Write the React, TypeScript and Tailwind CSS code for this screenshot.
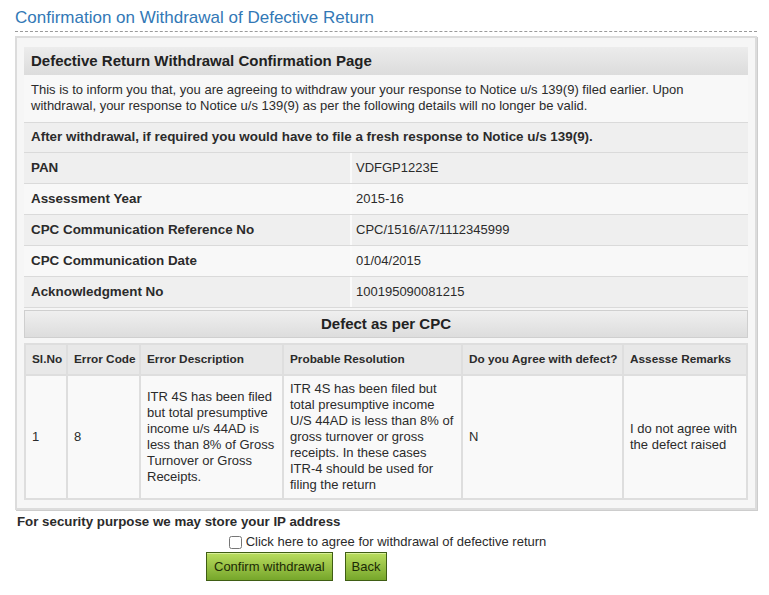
const details = [
  { label: "PAN", value: "VDFGP1223E", bg: "bg-[#efefef]" },
  { label: "Assessment Year", value: "2015-16", bg: "bg-[#f8f8f8]" },
  { label: "CPC Communication Reference No", value: "CPC/1516/A7/1112345999", bg: "bg-[#efefef]" },
  { label: "CPC Communication Date", value: "01/04/2015", bg: "bg-[#f8f8f8]" },
  { label: "Acknowledgment No", value: "100195090081215", bg: "bg-[#efefef]" },
];

const columns = [
  "Sl.No",
  "Error Code",
  "Error Description",
  "Probable Resolution",
  "Do you Agree with defect?",
  "Assesse Remarks",
];

const defects = [
  [
    "1",
    "8",
    "ITR 4S has been filed but total presumptive income u/s 44AD is less than 8% of Gross Turnover or Gross Receipts.",
    "ITR 4S has been filed but total presumptive income U/S 44AD is less than 8% of gross turnover or gross receipts. In these cases ITR-4 should be used for filing the return",
    "N",
    "I do not agree with the defect raised",
  ],
];

export default function App() {
  return (
    <div className="w-[769px] h-[595px] bg-white font-['Liberation_Sans',Arial,sans-serif] text-[#2b2b2b] overflow-hidden">
      {/* Title */}
      <div className="pl-[15px] pr-[12px] pt-[8px]">
        <h1 className="text-[17px] leading-[20px] text-[#3278b6] pb-[3px] border-b border-dashed border-[#9a9a9a]">
          Confirmation on Withdrawal of Defective Return
        </h1>
      </div>

      {/* Panel */}
      <div className="ml-[15px] w-[742px] mt-[4px] border-2 border-[#dcdcdc] bg-[#f6f6f6] px-[7px] pt-[9px] pb-[8px] shadow-[1px_1px_0_#cdcdcd]">
        <div className="h-[28px] flex items-center px-[7px] bg-gradient-to-b from-[#ececec] to-[#dcdcdc] text-[15px] font-bold text-[#222]">
          Defective Return Withdrawal Confirmation Page
        </div>

        <p className="px-[7px] pt-[7px] pb-[8px] text-[13px] leading-[16px] bg-[#f8f8f8]">
          This is to inform you that, you are agreeing to withdraw your your response to Notice u/s 139(9) filed earlier. Upon withdrawal, your response to Notice u/s 139(9) as per the following details will no longer be valid.
        </p>

        <div className="h-[31px] flex items-center px-[7px] bg-[#efefef] border-t border-b border-[#dadada] text-[13.4px] font-bold">
          After withdrawal, if required you would have to file a fresh response to Notice u/s 139(9).
        </div>

        {details.map((d) => (
          <div key={d.label} className={`h-[31px] flex border-b border-[#dadada] text-[13px] ${d.bg}`}>
            <div className="w-[326px] flex items-center px-[7px] font-bold text-[13.4px]">{d.label}</div>
            <div className="flex-1 flex items-center pl-[4px] border-l-2 border-[#fafafa]">{d.value}</div>
          </div>
        ))}

        <div className="mt-[2px] h-[28px] flex items-center justify-center border border-[#cfcfcf] bg-gradient-to-b from-[#efefef] to-[#dddddd] text-[15px] font-bold text-[#222]">
          Defect as per CPC
        </div>

        {/* Defect table */}
        <div className="mt-[5px] border-2 border-[#dedede] bg-[#dedede] grid grid-cols-[40px_71px_141px_177px_159px_122px] gap-[2px]">
          {columns.map((c) => (
            <div key={c} className="h-[29px] flex items-center px-[6px] bg-[#e8e8e8] text-[11.8px] font-bold whitespace-nowrap">
              {c}
            </div>
          ))}
          {defects.map((row) =>
            row.map((cell, i) => (
              <div key={i} className="h-[122px] flex items-center px-[6px] bg-[#f9f9f9] text-[13px] leading-[16px]">
                {cell}
              </div>
            ))
          )}
        </div>
      </div>

      {/* Footer */}
      <p className="mt-[4px] px-[17px] text-[13.3px] leading-[16px] font-bold">
        For security purpose we may store your IP address
      </p>
      <label className="mt-[4px] flex items-center justify-center gap-[4px] text-[13px] leading-[16px] pl-[6px]">
        <input type="checkbox" className="w-[13px] h-[13px] m-0 accent-gray-400" />
        Click here to agree for withdrawal of defective return
      </label>
      <div className="mt-[2px] pl-[206px] flex gap-[12px]">
        <button className="h-[29px] px-[7px] border border-[#3f5d14] bg-gradient-to-b from-[#b9dd5e] to-[#76a62a] text-[#1c2a05] text-[13px] font-['Liberation_Sans_Narrow','Liberation_Sans',sans-serif] shadow-[inset_0_1px_0_#d8ef9a]">
          Confirm withdrawal
        </button>
        <button className="h-[29px] px-[6px] border border-[#3f5d14] bg-gradient-to-b from-[#b9dd5e] to-[#76a62a] text-[#1c2a05] text-[13px] font-['Liberation_Sans_Narrow','Liberation_Sans',sans-serif] shadow-[inset_0_1px_0_#d8ef9a]">
          Back
        </button>
      </div>
    </div>
  );
}
